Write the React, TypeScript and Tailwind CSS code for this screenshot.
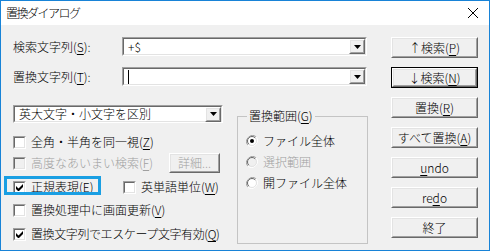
import React from "react";

const FONT = { fontFamily: '"Meiryo UI", "Noto Sans CJK JP", sans-serif' };

function Sunken({ className = "", children }: { className?: string; children?: React.ReactNode }) {
	return (
		<div className={`border border-t-[#a0a0a0] border-l-[#a0a0a0] border-b-white border-r-white ${className}`}>
			<div className="w-full h-full border border-t-[#696969] border-l-[#696969] border-b-[#e3e3e3] border-r-[#e3e3e3] bg-white flex items-center">
				{children}
			</div>
		</div>
	);
}

function Raised({ className = "", inner = "", children }: { className?: string; inner?: string; children?: React.ReactNode }) {
	return (
		<div className={`border border-t-white border-l-white border-b-[#696969] border-r-[#696969] ${className}`}>
			<div className={`w-full h-full border border-t-[#e3e3e3] border-l-[#e3e3e3] border-b-[#a0a0a0] border-r-[#a0a0a0] bg-[#f0f0f0] flex items-center justify-center ${inner}`}>
				{children}
			</div>
		</div>
	);
}

function DropArrow() {
	return (
		<Raised className="w-[16px] h-[15px] shrink-0">
			<svg width="7" height="4" viewBox="0 0 7 4">
				<path d="M0 0H7L3.5 4Z" fill="#000" />
			</svg>
		</Raised>
	);
}

function Combo({ className = "", text, caret }: { className?: string; text?: string; caret?: boolean }) {
	return (
		<Sunken className={className}>
			<div className="flex-1 pl-[4px] text-[12px] leading-none text-black flex items-center">
				{caret && <span className="inline-block w-px h-[14px] bg-black" />}
				{text}
			</div>
			<DropArrow />
		</Sunken>
	);
}

function CheckBox({ checked, disabled }: { checked?: boolean; disabled?: boolean }) {
	return (
		<div className="w-[13px] h-[13px] border border-t-[#a0a0a0] border-l-[#a0a0a0] border-b-white border-r-white shrink-0">
			<div
				className={`w-full h-full border border-t-[#696969] border-l-[#696969] border-b-[#e3e3e3] border-r-[#e3e3e3] flex items-center justify-center ${disabled ? "bg-[#f0f0f0]" : "bg-white"}`}
			>
				{checked && (
					<svg width="7" height="7" viewBox="0 0 7 7">
						<path d="M0 2v3l2 2h1l4-4V0L2.5 4.5Z" fill="#000" />
					</svg>
				)}
			</div>
		</div>
	);
}

function Radio({ checked, disabled }: { checked?: boolean; disabled?: boolean }) {
	return (
		<svg width="12" height="12" viewBox="0 0 12 12" className="shrink-0">
			<path d="M10.2 1.8A6 6 0 0 0 1.8 10.2" fill="none" stroke="#a0a0a0" strokeWidth="1" />
			<path d="M1.8 10.2A6 6 0 0 0 10.2 1.8" fill="none" stroke="#ffffff" strokeWidth="1" />
			<circle cx="6" cy="6" r="4.5" fill={disabled ? "#f0f0f0" : "#fff"} stroke="#e3e3e3" strokeWidth="1" />
			<path d="M9.2 2.8A4.5 4.5 0 0 0 2.8 9.2" fill="none" stroke="#696969" strokeWidth="1" />
			{checked && <circle cx="6" cy="6" r="2" fill="#000" />}
		</svg>
	);
}

function Acc({ children }: { children: React.ReactNode }) {
	return <span className="underline underline-offset-[2px] decoration-1">{children}</span>;
}

function CheckRow({
	checked,
	disabled,
	children,
	className = "",
}: {
	checked?: boolean;
	disabled?: boolean;
	children: React.ReactNode;
	className?: string;
}) {
	return (
		<div className={`flex items-center h-[20px] gap-[5px] ${className}`}>
			<CheckBox checked={checked} disabled={disabled} />
			<span className={`text-[12px] leading-none whitespace-nowrap ${disabled ? "text-[#a0a0a0]" : "text-black"}`}>
				{children}
			</span>
		</div>
	);
}

function RadioRow({ checked, disabled, children }: { checked?: boolean; disabled?: boolean; children: React.ReactNode }) {
	return (
		<div className="flex items-center h-[21px] gap-[5px]">
			<Radio checked={checked} disabled={disabled} />
			<span className={`text-[12px] leading-none whitespace-nowrap ${disabled ? "text-[#a0a0a0]" : "text-black"}`}>
				{children}
			</span>
		</div>
	);
}

function SideButton({ children, focused }: { children: React.ReactNode; focused?: boolean }) {
	const body = (
		<Raised className={focused ? "w-full h-full" : "w-[87px] h-[21px]"}>
			<span className="text-[12px] leading-none text-black whitespace-nowrap">{children}</span>
		</Raised>
	);
	if (focused) {
		return <div className="w-[87px] h-[21px] border border-black">{body}</div>;
	}
	return body;
}

export default function App() {
	return (
		<div className="w-[490px] h-[251px] border border-[#1883d7] flex flex-col bg-[#f0f0f0] font-light" style={FONT}>
			{/* title bar */}
			<div className="h-[24px] bg-white flex items-center justify-between pl-[5px] pr-[11px] shrink-0">
				<span className="text-[12px] leading-none text-black tracking-[-1.5px]">置換ダイアログ</span>
				<svg width="10" height="10" viewBox="0 0 10 10">
					<path d="M0 0L10 10M10 0L0 10" stroke="#000" strokeWidth="1" />
				</svg>
			</div>

			{/* client */}
			<div className="flex-1 flex pl-[12px] pt-[12px]">
				<div className="w-[355px] flex flex-col">
					<div className="flex items-center h-[19px]">
						<span className="w-[109px] text-[12px] leading-none text-black">
							検索文字列(<Acc>S</Acc>):
						</span>
						<Combo className="w-[245px] h-[19px]" text="+$" />
					</div>
					<div className="flex items-center h-[19px] mt-[11px]">
						<span className="w-[109px] text-[12px] leading-none text-black">
							置換文字列(<Acc>T</Acc>):
						</span>
						<Combo className="w-[245px] h-[19px]" caret />
					</div>

					<div className="flex mt-[19px]">
						<div className="w-[224px] flex flex-col">
							<Combo className="w-[210px] h-[18px]" text="英大文字・小文字を区別" />
							<CheckRow className="mt-[9px]">
								全角・半角を同一視(<Acc>Z</Acc>)
							</CheckRow>
							<div className="flex items-center h-[20px] mt-[1px]">
								<CheckRow disabled className="w-[156px]">
									高度なあいまい検索(<Acc>F</Acc>)
								</CheckRow>
								<Raised className="w-[51px] h-[20px]">
									<span className="text-[12px] leading-none text-[#a0a0a0]">詳細...</span>
								</Raised>
							</div>
							<div className="flex items-center mt-[4px]">
								<div className="relative w-[110px]">
									<div className="absolute -left-[9px] -top-[1px] w-[97px] h-[19px] border-[3px] border-[#1a9fe3]" />
									<CheckRow checked>
										正規表現(<Acc>E</Acc>)
									</CheckRow>
								</div>
								<CheckRow>
									英単語単位(<Acc>W</Acc>)
								</CheckRow>
							</div>
							<CheckRow className="mt-[3px]">
								置換処理中に画面更新(<Acc>V</Acc>)
							</CheckRow>
							<CheckRow checked className="mt-[4px] tracking-[-0.4px]">
								置換文字列でエスケープ文字有効(<Acc>Q</Acc>)
							</CheckRow>
						</div>

						<fieldset className="w-[131px] mt-[5px] border border-[#c4c4c4] pl-[8px] pr-0 pt-[8px] pb-[10px] m-0">
							<legend className="text-[12px] leading-none text-black px-[2px] ml-[1px]">
								置換範囲(<Acc>G</Acc>)
							</legend>
							<RadioRow checked>ファイル全体</RadioRow>
							<RadioRow disabled>選択範囲</RadioRow>
							<RadioRow>開ファイル全体</RadioRow>
						</fieldset>
					</div>
				</div>

				<div className="ml-[23px] flex flex-col gap-[9px]">
					<SideButton>
						↑検索(<Acc>P</Acc>)
					</SideButton>
					<SideButton focused>
						↓検索(<Acc>N</Acc>)
					</SideButton>
					<SideButton>
						置換(<Acc>R</Acc>)
					</SideButton>
					<SideButton>
						すべて置換(<Acc>A</Acc>)
					</SideButton>
					<SideButton>
						<Acc>u</Acc>ndo
					</SideButton>
					<SideButton>
						re<Acc>d</Acc>o
					</SideButton>
					<SideButton>終了</SideButton>
				</div>
			</div>
		</div>
	);
}
